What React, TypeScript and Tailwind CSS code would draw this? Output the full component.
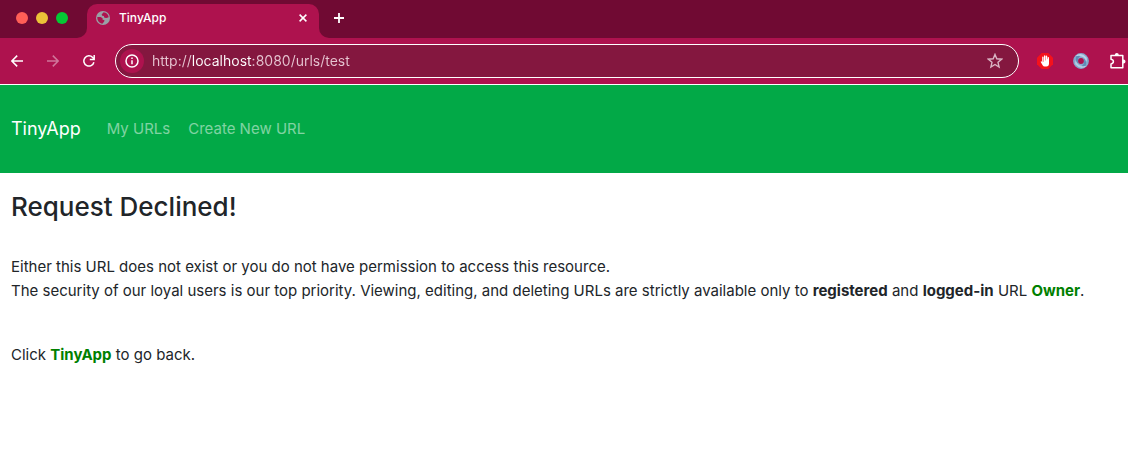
import React from "react";

function GlobeIcon() {
  return (
    <svg width="14" height="14" viewBox="0 0 14 14" aria-hidden="true" className="shrink-0">
      <circle cx="7" cy="7" r="7" fill="#9aa0a6" />
      <path
        d="M1.3 6 4.6 6 6.6 7.2 6.6 8.8 8.4 9 8.2 10.6 6.4 12.7C3.6 12.4 1.1 10 1.3 6ZM7.6 1.3 5.6 3.4 6.2 4.8 7.8 5.1 8.4 6.7 10.4 7.1 12.7 6.2C12.3 3.6 10.4 1.6 7.6 1.3Z"
        fill="#ae124e"
      />
    </svg>
  );
}

function TabStrip() {
  return (
    <div className="flex h-[38px] items-stretch bg-[#700a33]">
      <div className="flex w-[77px] shrink-0 items-center gap-2 pb-[2px] pl-4">
        <button aria-label="Close window" className="size-3 rounded-full bg-[#ff5f57]" />
        <button aria-label="Minimize window" className="size-3 rounded-full bg-[#ecc238]" />
        <button aria-label="Zoom window" className="size-3 rounded-full bg-[#05c935]" />
      </div>
      <div className="w-[10px] shrink-0 bg-[#ae124e]">
        <div className="h-full rounded-br-[10px] bg-[#700a33]" />
      </div>
      <div className="mt-1 flex w-[232px] shrink-0 items-center rounded-t-[10px] bg-[#ae124e] pr-[11px] pb-[6px] pl-[9px]">
        <GlobeIcon />
        <span className="ml-[9px] grow text-[12px] leading-4 font-medium text-white">TinyApp</span>
        <button aria-label="Close tab" className="flex size-[10px] items-center justify-center">
          <svg width="8" height="8" viewBox="0 0 8 8" stroke="#fff" strokeWidth="1.5" aria-hidden="true">
            <path d="M.6.6 7.4 7.4M7.4.6.6 7.4" />
          </svg>
        </button>
      </div>
      <div className="w-[10px] shrink-0 bg-[#ae124e]">
        <div className="h-full rounded-bl-[10px] bg-[#700a33]" />
      </div>
      <button aria-label="New tab" className="flex w-5 shrink-0 items-center justify-center pb-[2px]">
        <svg width="10" height="10" viewBox="0 0 10 10" stroke="#fff" strokeWidth="1.8" aria-hidden="true">
          <path d="M5 0V10M0 5H10" />
        </svg>
      </button>
    </div>
  );
}

function Toolbar() {
  return (
    <div className="flex h-[47px] items-center border-b border-white bg-[#ae124e] pr-[1px] pl-[9px]">
      <button aria-label="Back" className="flex size-4 shrink-0 items-center justify-center">
        <svg width="12" height="12" viewBox="0 0 12 12" fill="none" stroke="#fff" strokeWidth="1.5" aria-hidden="true">
          <path d="M12 6H1M6.2.6.9 6l5.3 5.4" />
        </svg>
      </button>
      <button aria-label="Forward" disabled className="ml-5 flex size-4 shrink-0 items-center justify-center">
        <svg width="12" height="12" viewBox="0 0 12 12" fill="none" stroke="#d0769a" strokeWidth="1.5" aria-hidden="true">
          <path d="M0 6H11M5.8.6 11.1 6l-5.3 5.4" />
        </svg>
      </button>
      <button aria-label="Reload" className="ml-5 flex size-4 shrink-0 items-center justify-center">
        <svg width="12" height="12" viewBox="0 0 12 12" fill="none" stroke="#fff" strokeWidth="1.5" aria-hidden="true">
          <path d="M10.9 7.2A5.1 5.1 0 1 1 9.7 2.5L11 3.8M11.2 0V4.4H6.8" />
        </svg>
      </button>
      <div className="ml-[18px] flex h-[34px] min-w-0 grow items-center rounded-full border border-white bg-[#84173f] pr-[15px] pl-1">
        <button
          aria-label="View site information"
          className="flex size-6 shrink-0 items-center justify-center rounded-full bg-[#ae124e]"
        >
          <svg width="14" height="14" viewBox="0 0 14 14" fill="none" stroke="#fff" strokeWidth="1.5" aria-hidden="true">
            <circle cx="7" cy="7" r="6" />
            <path d="M7 6.2V10.2M7 3.6V5.1" />
          </svg>
        </button>
        <input
          aria-label="Address"
          defaultValue="http://localhost:8080/urls/test"
          className="ml-2 h-6 min-w-0 grow bg-[linear-gradient(90deg,#e6c5d1_40px,#fff_40px,#fff_101px,#e6c5d1_101px)] bg-clip-text text-[14px] leading-6 text-transparent outline-none"
        />
        <button aria-label="Bookmark this page" className="flex size-4 shrink-0 items-center justify-center">
          <svg width="16" height="16" viewBox="0 0 16 16" fill="none" stroke="#d9b5c4" strokeWidth="1.4" aria-hidden="true">
            <path d="M8 1.4 9.8 5.8 14.6 6.2 11 9.3 12.1 14 8 11.5 3.9 14 5 9.3 1.4 6.2 6.2 5.8Z" />
          </svg>
        </button>
      </div>
      <button aria-label="AdBlock" className="ml-[18px] shrink-0">
        <svg width="16" height="16" viewBox="0 0 16 16" aria-hidden="true">
          <path d="M4.7 0H11.3L16 4.7V11.3L11.3 16H4.7L0 11.3V4.7Z" fill="#f4121c" />
          <path
            d="M5.6 9.6 4.5 8.3 3.6 8.7 5.6 12.2Q6.4 13.4 7.6 13.4H9.4Q12 13.2 12 10.4V5"
            fill="#fff"
          />
          <path
            d="M5.9 10V4.2M7.7 10V3M9.5 10V3.3M11.3 10V4.8"
            stroke="#fff"
            strokeWidth="1.4"
            strokeLinecap="round"
          />
        </svg>
      </button>
      <button aria-label="JSON viewer" className="ml-5 shrink-0">
        <svg width="16" height="16" viewBox="0 0 16 16" fill="none" aria-hidden="true">
          <circle cx="8" cy="8" r="5.4" stroke="#83a9cc" strokeWidth="5" />
          <path d="M2.5 3Q8-1.6 13.6 4.4Q14.4 7 13 9Q12 3.4 7 3.2Q4 3 2.5 3Z" fill="#bcd2e6" />
          <path d="M13.5 13Q8 17.6 2.4 11.6Q1.6 9 3 7Q4 12.6 9 12.8Q12 13 13.5 13Z" fill="#b3cbe1" />
          <path d="M3.2 3.4Q5.2 2.6 7.4 3Q3.8 5.2 5.2 10.6Q2 8.2 3.2 3.4ZM12.8 12.6Q10.8 13.4 8.6 13Q12.2 10.8 10.8 5.4Q14 7.8 12.8 12.6Z" fill="#5f8cb7" />
        </svg>
      </button>
      <button aria-label="Extensions" className="ml-5 shrink-0">
        <svg width="18" height="18" viewBox="0 0 18 18" aria-hidden="true">
          <path
            d="M2 3.5H13.8V15.7H2V12Q4.4 11.5 4.4 9.6T2 7.2Z"
            fill="none"
            stroke="#fff"
            strokeWidth="1.5"
            strokeLinejoin="round"
          />
          <path d="M5.8 3.3V3A2 2 0 0 1 9.8 3V3.3ZM14 7.6H14.5A2 2 0 0 1 14.5 11.6H14Z" fill="#fff" />
        </svg>
      </button>
    </div>
  );
}

function SiteHeader() {
  return (
    <header className="bg-[#02a947] px-[11px] py-6">
      <nav className="flex h-10 items-center">
        <a href="/" className="text-[18px] leading-8 text-white">
          TinyApp
        </a>
        <a href="/urls" className="ml-[26px] text-[15px] leading-6 text-white/50">
          My URLs
        </a>
        <a href="/urls/new" className="ml-[18px] text-[15px] leading-6 text-white/50">
          Create New URL
        </a>
      </nav>
    </header>
  );
}

export default function App() {
  return (
    <div className="min-h-screen bg-white font-['Inter','Liberation_Sans',sans-serif] text-[#212529]">
      <TabStrip />
      <Toolbar />
      <SiteHeader />
      <main className="px-[11px] pt-4">
        <h1 className="text-[26px] leading-9 font-medium">Request Declined!</h1>
        <p className="mt-[30px] text-[15px] leading-6">
          Either this URL does not exist or you do not have permission to access this resource.
          <br />
          The security of our loyal users is our top priority. Viewing, editing, and deleting URLs are strictly
          available only to <strong>registered</strong> and <strong>logged-in</strong> URL{" "}
          <strong className="text-[#008000]">Owner</strong>.
        </p>
        <p className="mt-10 text-[15px] leading-6">
          Click{" "}
          <a href="/urls" className="font-bold text-[#008000]">
            TinyApp
          </a>{" "}
          to go back.
        </p>
      </main>
    </div>
  );
}
